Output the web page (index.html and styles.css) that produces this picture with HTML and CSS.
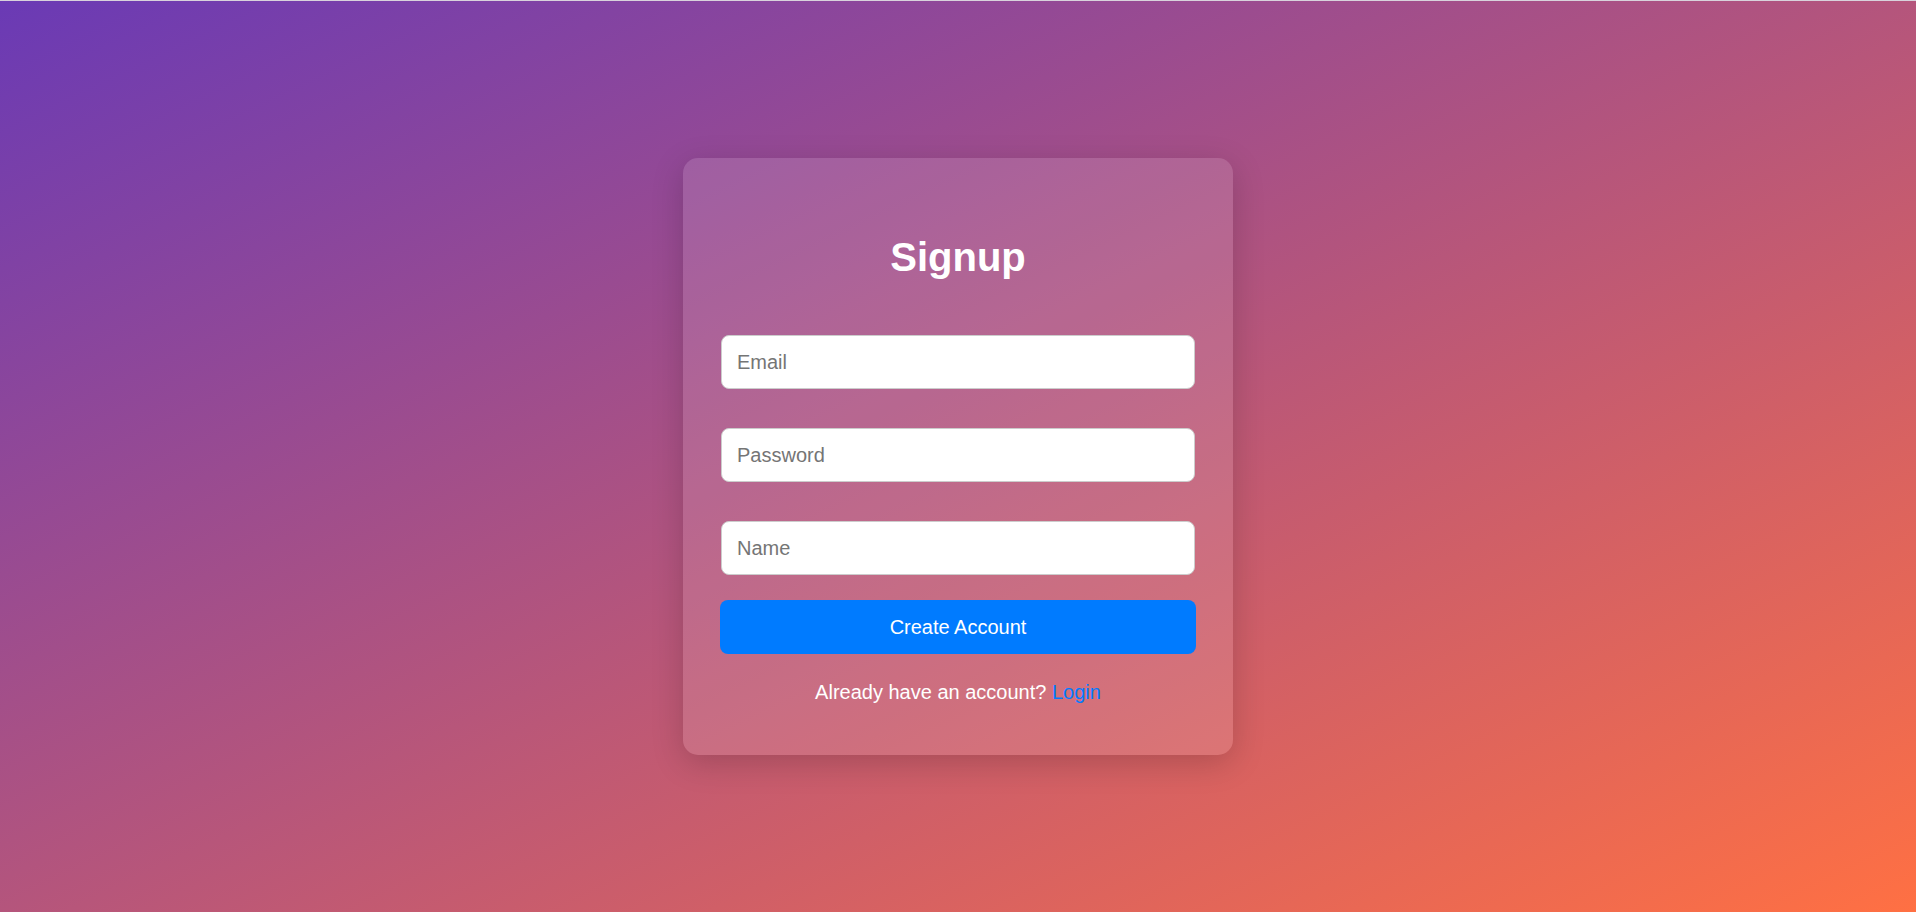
FILE: index.html
```html
<!DOCTYPE html>
<html lang="en">
<head>
<meta charset="utf-8">
<title>Signup</title>
<link rel="stylesheet" href="styles.css">
</head>
<body>
<main class="page">
  <section class="card">
    <h1 class="title">Signup</h1>
    <form class="form">
      <input class="field" type="email" placeholder="Email">
      <input class="field" type="password" placeholder="Password">
      <input class="field field-last" type="text" placeholder="Name">
      <button class="submit" type="button">Create Account</button>
    </form>
    <p class="footer">Already have an account? <a class="link" href="#">Login</a></p>
  </section>
</main>
</body>
</html>
```

FILE: styles.css
```css
* { box-sizing: border-box; }
html, body {
  margin: 0;
  padding: 0;
  height: 100%;
}
body {
  font-family: "Liberation Sans", Arial, sans-serif;
  background: linear-gradient(to bottom right, #6a3ab5 0%, #ff7043 100%);
}
.page {
  height: 100vh;
  display: flex;
  align-items: center;
  justify-content: center;
  border-top: 1px solid #d8d2dc;
}
.card {
  width: 550px;
  padding: 39px 38px 51px;
  border-radius: 15px;
  background: rgba(255, 255, 255, 0.12);
  box-shadow: 0 8px 32px rgba(0, 0, 0, 0.18);
}
.title {
  margin: 37px 0 55px;
  text-align: center;
  color: #fff;
  font-size: 40px;
  font-weight: bold;
  line-height: 46px;
}
.form {
  display: flex;
  flex-direction: column;
}
.field {
  height: 54px;
  margin: 0 0 39px;
  padding: 0 15px;
  border: 1px solid #cccccc;
  border-radius: 8px;
  background: #fff;
  font-family: "Liberation Sans", Arial, sans-serif;
  font-size: 20px;
  color: #333;
  outline: none;
}
.field::placeholder { color: #757575; }
.field-last { margin-bottom: 25px; }
.submit {
  height: 54px;
  margin: 0 -1px;
  border: none;
  border-radius: 8px;
  background: #007bff;
  color: #fff;
  font-family: "Liberation Sans", Arial, sans-serif;
  font-size: 20px;
  cursor: pointer;
}
.footer {
  margin: 27px 0 0;
  text-align: center;
  color: #fff;
  font-size: 20px;
  line-height: 23px;
}
.link {
  color: #007bff;
  text-decoration: none;
}
```
